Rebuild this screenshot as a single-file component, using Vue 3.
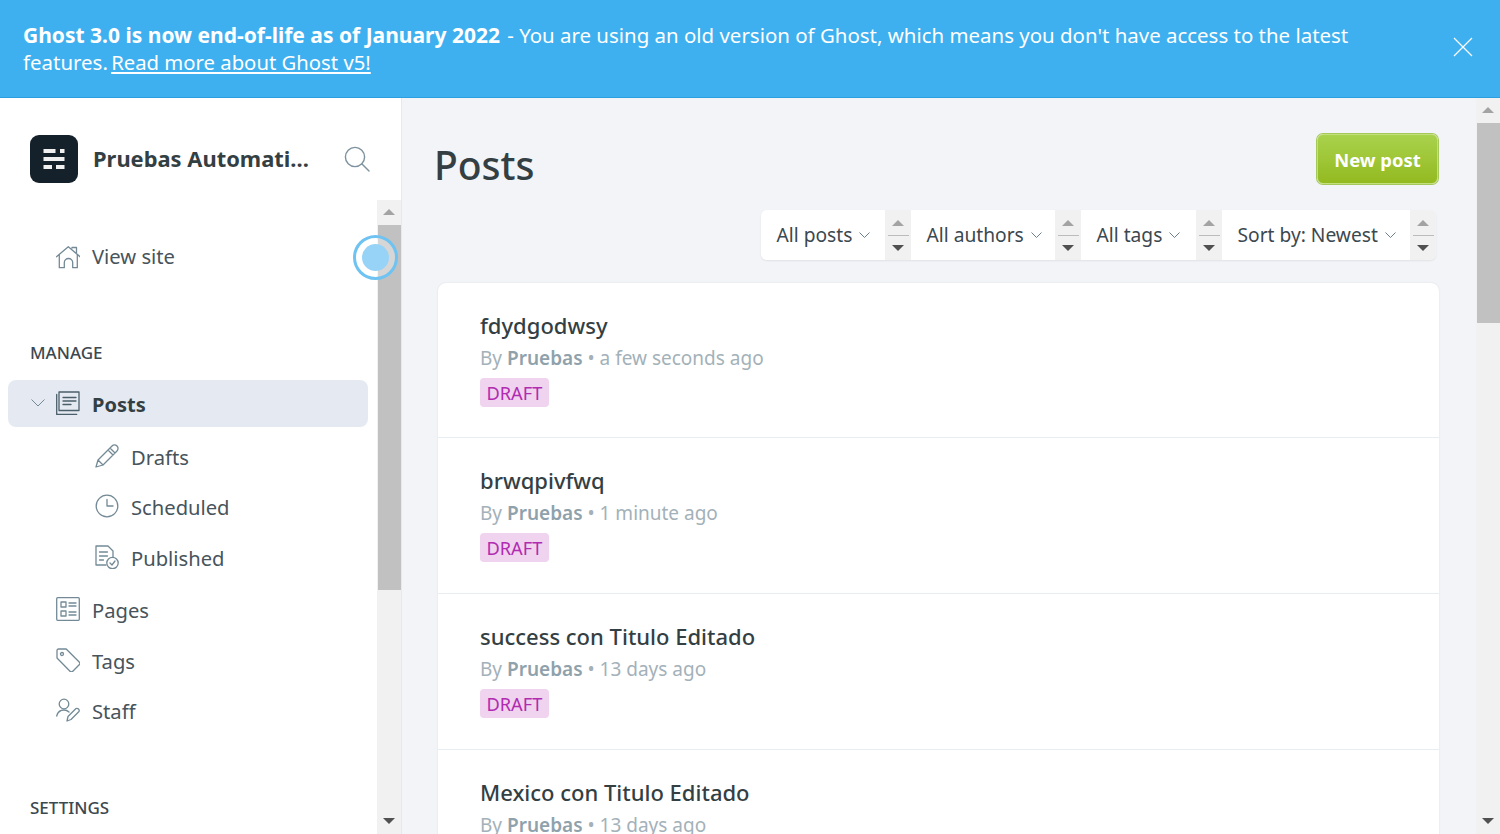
<template>
  <div class="app">
    <div class="banner">
      <p class="banner-text">
        <strong>Ghost 3.0 is now end-of-life as of January 2022</strong> - You are using an old version of Ghost, which means you don't have access to the latest features. <a href="#">Read more about Ghost v5!</a>
      </p>
      <svg class="banner-close" width="20" height="20" viewBox="0 0 20 20" fill="none" stroke="#fff" stroke-width="1.2">
        <path d="M1 1l18 18M19 1L1 19" />
      </svg>
    </div>

    <div class="layout">
      <aside class="sidebar">
        <div class="brand">
          <div class="logo">
            <svg width="24" height="22" viewBox="0 0 24 22" fill="#f0f0f0">
              <rect x="1.500" y="1" width="12" height="4" />
              <rect x="18" y="1" width="4.500" height="4" />
              <rect x="1.500" y="9" width="21" height="4" />
              <rect x="1.500" y="17" width="8.500" height="4" />
              <rect x="14" y="17" width="8.500" height="4" />
            </svg>
          </div>
          <span class="brand-name">Pruebas Automati...</span>
          <svg class="search" width="26" height="26" viewBox="0 0 26 26" fill="none" stroke="#7d929e" stroke-width="1.4" stroke-linecap="round">
            <circle cx="11" cy="11" r="9.600" />
            <path d="M18 18l7 7" />
          </svg>
        </div>

        <div class="side-scroll">
          <nav class="nav">
            <div class="nav-item view-site">
              <svg class="icon" viewBox="0 0 24 24"><path d="M.5 11.700L12.300 1.700 24 11.700M3.300 9.500v13.200h5v-5a4 4 0 0 1 8.400 0v5h4.600V9.500M16 3V2.500h4.500v5" /></svg>
              <span>View site</span>
            </div>

            <div class="nav-heading manage">MANAGE</div>

            <div class="nav-item active">
              <svg class="caret" width="14" height="8" viewBox="0 0 14 8"><path d="M.5.5L7 7 13.500.5" /></svg>
              <svg class="icon" viewBox="0 0 24 24"><path d="M3 1h20v18.500H3zM7 6.500h13M7 10h13M7 13.500h8M.7 3.500v20h20" /></svg>
              <span>Posts</span>
            </div>

            <div class="nav-item sub">
              <svg class="icon" viewBox="0 0 24 24"><path d="M1 23l2-7L17 2a3 3 0 0 1 5 5L8 21zM3 16l5 5M15 4l5 5M13 6l5 5" /></svg>
              <span>Drafts</span>
            </div>
            <div class="nav-item sub">
              <svg class="icon" viewBox="0 0 24 24"><circle cx="12" cy="12" r="10.800" /><path d="M12 5.500V12h6" /></svg>
              <span>Scheduled</span>
            </div>
            <div class="nav-item sub published">
              <svg class="icon" viewBox="0 0 24 24"><path d="M11 20H1V1h12l5 5v6M4.500 7h8M4.500 11h8M4.500 15h4" /><circle cx="17.500" cy="18" r="5.700" /><path d="M15 18l2 2 3-4" /></svg>
              <span>Published</span>
            </div>
            <div class="nav-item">
              <svg class="icon" viewBox="0 0 24 24"><rect x=".7" y=".7" width="22.600" height="22.600" rx="1" /><path d="M5 5h5v5H5zM5 14h5v5H5zM13 6h7M13 9h7M13 15h7M13 18h7" /></svg>
              <span>Pages</span>
            </div>
            <div class="nav-item">
              <svg class="icon" viewBox="0 0 24 24"><path d="M1 2.500A1.500 1.500 0 0 1 2.500 1h7.700l13 13a2 2 0 0 1 0 2.800l-6.400 6.400a2 2 0 0 1-2.800 0L1 10z" /><circle cx="6" cy="6" r="1.500" /></svg>
              <span>Tags</span>
            </div>
            <div class="nav-item">
              <svg class="icon" viewBox="0 0 24 24"><circle cx="8" cy="6" r="4.800" /><path d="M.7 18c1-4 4-6 7.300-6 2 0 3.500.6 5 2M11 23l1-4.500 8-8a2.300 2.300 0 0 1 3 3l-8 8z" /></svg>
              <span>Staff</span>
            </div>

            <div class="nav-heading settings">SETTINGS</div>
          </nav>

          <div class="scrollbar">
            <span class="arrow up"></span>
            <div class="track"><div class="thumb side-thumb"></div></div>
            <span class="arrow down"></span>
          </div>

          <div class="pulse"><span></span></div>
        </div>
      </aside>

      <main class="main">
        <div class="content">
          <header class="page-head">
            <h1>Posts</h1>
            <button class="new-post">New post</button>
          </header>

          <div class="filters">
            <div class="filter" v-for="f in filters" :key="f.label">
              <div class="filter-label" :style="{ width: f.width + 'px' }">
                <span>{{ f.label }}</span>
                <svg width="11" height="7" viewBox="0 0 11 7" fill="none" stroke="#6c808b"><path d="M.5.5L5.500 5.500 10.500.5" /></svg>
              </div>
              <div class="spinner">
                <span class="arrow up"></span>
                <i></i>
                <span class="arrow down"></span>
              </div>
            </div>
          </div>

          <div class="post-list">
            <div class="post" v-for="p in posts" :key="p.title">
              <h3>{{ p.title }}</h3>
              <p class="meta">By <b>Pruebas</b> • {{ p.time }}</p>
              <span class="tag">DRAFT</span>
            </div>
          </div>
        </div>

        <div class="scrollbar">
          <span class="arrow up"></span>
          <div class="track"><div class="thumb main-thumb"></div></div>
          <span class="arrow down"></span>
        </div>
      </main>
    </div>
  </div>
</template>

<script setup>
const filters = [
  { label: 'All posts', width: 124 },
  { label: 'All authors', width: 144 },
  { label: 'All tags', width: 115 },
  { label: 'Sort by: Newest', width: 188 },
];

const posts = [
  { title: 'fdydgodwsy', time: 'a few seconds ago' },
  { title: 'brwqpivfwq', time: '1 minute ago' },
  { title: 'success con Titulo Editado', time: '13 days ago' },
  { title: 'Mexico con Titulo Editado', time: '13 days ago' },
];
</script>

<style>
html,
body {
  margin: 0;
  overflow: hidden;
}
</style>

<style scoped>
* {
  box-sizing: border-box;
}

.app {
  width: 1500px;
  height: 834px;
  display: flex;
  flex-direction: column;
  overflow: hidden;
  font-family: "Noto Sans", "Open Sans", sans-serif;
  color: #3c484f;
}

.banner {
  height: 98px;
  flex: none;
  display: flex;
  align-items: center;
  justify-content: space-between;
  padding: 0 27px 0 23px;
  background: #3eb0ef;
  border-bottom: 1px solid #2c9fe0;
  color: #fff;
}

.banner-text {
  margin: 0;
  width: 1380px;
  font-size: 20.450px;
  line-height: 27px;
}

.banner-text strong {
  font-size: 21px;
  margin-right: 2px;
}

.banner-text a {
  color: #fff;
  font-size: 20.300px;
  margin-left: -2px;
}

.banner-close {
  margin-bottom: 3px;
}

.layout {
  flex: 1;
  display: flex;
  min-height: 0;
}

.sidebar {
  width: 402px;
  flex: none;
  display: flex;
  flex-direction: column;
  background: #fff;
  border-right: 1px solid #e4e8ef;
}

.brand {
  height: 102px;
  flex: none;
  display: flex;
  align-items: center;
  padding: 0 30px;
  margin-top: 10px;
  margin-bottom: -10px;
}

.logo {
  width: 48px;
  height: 48px;
  border-radius: 9px;
  background: #15212a;
  display: flex;
  align-items: center;
  justify-content: center;
}

.brand-name {
  margin: 0 0 2px 15px;
  font-size: 21.900px;
  font-weight: 700;
  color: #343f44;
  white-space: nowrap;
}

.search {
  margin-left: auto;
  margin-right: 1px;
}

.side-scroll {
  flex: 1;
  min-height: 0;
  display: flex;
  position: relative;
}

.nav {
  flex: 1;
  padding: 32px 9px 0 8px;
}

.nav-item {
  height: 50.500px;
  display: flex;
  align-items: center;
  padding-left: 48px;
  font-size: 20.200px;
  color: #47545b;
}

.nav-item span {
  margin-top: 2px;
}

.nav-item.view-site span {
  margin-top: 0;
  margin-bottom: 2px;
}

.nav-item .icon {
  width: 24px;
  height: 24px;
  flex: none;
  margin-right: 12px;
  fill: none;
  stroke: #738a96;
  stroke-width: 1.300;
  stroke-linejoin: round;
  stroke-linecap: round;
}

.nav-item.sub {
  padding-left: 87px;
}

.nav-item.published {
  margin-bottom: 2px;
}

.nav-item.active {
  height: 47px;
  padding-left: 23px;
  border-radius: 8px;
  background: #e5eaf2;
  font-size: 20px;
  font-weight: 700;
  color: #343f44;
  margin-bottom: 4px;
}

.nav-item.active .icon {
  stroke: #4b5f6a;
}

.caret {
  fill: none;
  stroke: #738a96;
  margin-right: 11px;
}

.nav-heading {
  padding-left: 22px;
  font-size: 17px;
  font-weight: 500;
  line-height: 22px;
  color: #3c484f;
}

.manage {
  margin-top: 59px;
  margin-bottom: 16px;
}

.settings {
  margin-top: 61px;
}

.scrollbar {
  width: 24px;
  flex: none;
  display: flex;
  flex-direction: column;
  align-items: center;
  background: #f1f1f1;
}

.scrollbar > .arrow {
  flex: none;
  margin: 9px 0 10px;
}

.arrow {
  display: block;
  width: 0;
  height: 0;
  border-left: 6px solid transparent;
  border-right: 6px solid transparent;
}

.arrow.up {
  border-bottom: 6px solid #a3a3a3;
}

.arrow.down {
  border-top: 6px solid #505050;
}

.track {
  flex: 1;
  width: 100%;
  padding-left: 1px;
}

.thumb {
  background: #c1c1c1;
  width: 100%;
}

.side-thumb {
  height: 365px;
}

.main-thumb {
  height: 200px;
}

.pulse {
  position: absolute;
  left: 353px;
  top: 35px;
  width: 45px;
  height: 45px;
  border: 3px solid #6fc3f2;
  border-radius: 50%;
  display: flex;
  align-items: center;
  justify-content: center;
  background: rgba(255, 255, 255, 0.35);
}

.pulse span {
  width: 27px;
  height: 27px;
  border-radius: 50%;
  background: #97d3f7;
}

.main {
  flex: 1;
  min-width: 0;
  display: flex;
  background: #f3f4f8;
}

.content {
  flex: 1;
  min-width: 0;
  padding: 0 37px 0 33px;
}

.page-head {
  display: flex;
  justify-content: space-between;
  align-items: flex-start;
  height: 112px;
  padding-top: 35px;
}

.page-head h1 {
  margin: 5px 0 0 -1px;
  font-size: 39px;
  line-height: 53px;
  font-weight: 500;
  color: #343f44;
}

.new-post {
  width: 121px;
  height: 50px;
  margin: 1px 1px 0 0;
  border: 1px solid #c3e07f;
  border-radius: 6px;
  background: linear-gradient(#a9d24d, #93ba20);
  box-shadow: 0 0 0 1px #a4c85a;
  color: #fff;
  font: 700 18.400px "Noto Sans", sans-serif;
  padding: 0;
}

.filters {
  display: flex;
  justify-content: flex-end;
  width: fit-content;
  margin: 0 3px 0 auto;
  border-radius: 6px;
  overflow: hidden;
  box-shadow: 0 1px 2px rgba(0, 0, 0, 0.08);
}

.filter {
  display: flex;
  height: 50px;
}

.filter-label {
  display: flex;
  align-items: center;
  gap: 7px;
  padding: 0 0 2px 15.500px;
  background: #fff;
  font-size: 19.200px;
  white-space: nowrap;
}

.filter-label svg {
  margin-top: 3px;
}

.spinner {
  width: 26px;
  background: #f1f1f1;
  display: flex;
  flex-direction: column;
  align-items: center;
  justify-content: center;
}

.spinner i {
  display: block;
  width: 21px;
  height: 1px;
  background: #bcbcbc;
  margin: 9px 0;
}

.post-list {
  margin-top: 23px;
  margin-left: 3px;
  background: #fff;
  border-radius: 8px 8px 0 0;
  box-shadow: 0 0 2px rgba(0, 0, 0, 0.1);
}

.post {
  height: 156px;
  padding: 27px 42px 0;
  border-bottom: 1px solid #e8edf2;
}

.post:first-child {
  height: 155px;
}

.post h3 {
  margin: 0;
  font-size: 22px;
  font-weight: 500;
  line-height: 31px;
  color: #343f44;
}

.post .meta {
  margin: 2px 0 0;
  font-size: 19px;
  line-height: 31px;
  color: #a3b1b9;
}

.post .meta b {
  color: #8fa2ac;
  font-weight: 600;
}

.tag {
  display: inline-block;
  margin-top: 4px;
  height: 29px;
  padding: 0 6.500px;
  border-radius: 4px;
  background: #f0d3ef;
  color: #b02cb0;
  font-size: 18.200px;
  line-height: 30px;
}
</style>
